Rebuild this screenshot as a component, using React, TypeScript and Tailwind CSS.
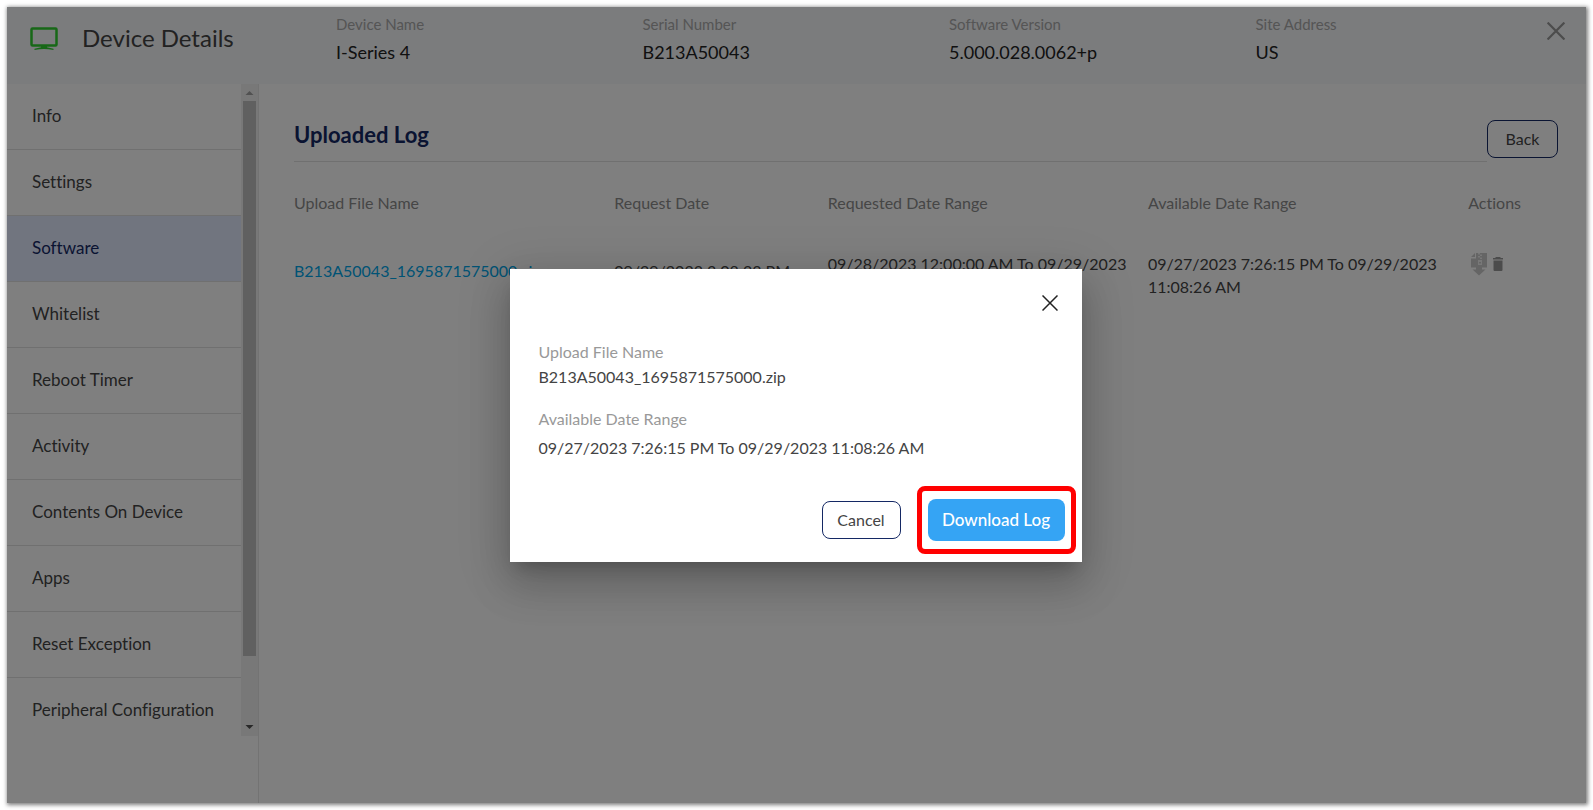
import type { ReactNode } from "react";

const deviceInfo = [
  { label: "Device Name", value: "I-Series 4" },
  { label: "Serial Number", value: "B213A50043" },
  { label: "Software Version", value: "5.000.028.0062+p" },
  { label: "Site Address", value: "US" },
];

const menu = [
  "Info",
  "Settings",
  "Software",
  "Whitelist",
  "Reboot Timer",
  "Activity",
  "Contents On Device",
  "Apps",
  "Reset Exception",
  "Peripheral Configuration",
];

const logs = [
  {
    file: "B213A50043_1695871575000.zip",
    requested: "09/29/2023 3:08:23 PM",
    requestedRange: "09/28/2023 12:00:00 AM To 09/29/2023 12:00:00 AM",
    availableRange: "09/27/2023 7:26:15 PM To 09/29/2023 11:08:26 AM",
  },
];

export default function App() {
  return (
    <div className="flex min-h-screen bg-white p-[7px] font-['Lato',sans-serif] text-[#444] [font-variant-ligatures:none]">
      <div className="relative flex min-w-0 flex-1 flex-col bg-white shadow-[1px_1px_4px_1px_rgba(0,0,0,0.5)]">
        <Header />
        <div className="flex flex-1">
          <Sidebar active="Software" />
          <UploadedLog />
        </div>
        <div className="absolute inset-0 flex items-center justify-center bg-black/50 pt-[21px] pr-0.5">
          <DownloadDialog log={logs[0]} />
        </div>
      </div>
    </div>
  );
}

function Header() {
  return (
    <header className="relative flex h-[77px] items-start bg-[#f6f8fb]">
      <div className="flex w-[329px] shrink-0 items-center pt-[13px] pl-[23px]">
        <MonitorIcon />
        <h1 className="ml-6 text-2xl leading-9 font-normal">Device Details</h1>
      </div>
      <dl className="grid flex-1 grid-cols-4 pt-2 pr-6">
        {deviceInfo.map((item) => (
          <div key={item.label}>
            <dt className="text-[15px] leading-[18px] text-[#aaa]">{item.label}</dt>
            <dd className="pt-[7px] text-lg leading-6 text-[#222]">{item.value}</dd>
          </div>
        ))}
      </dl>
      <button type="button" aria-label="Close" className="absolute top-[15px] right-[21px] text-[#999]">
        <CloseIcon size={18} stroke={2} />
      </button>
    </header>
  );
}

function Sidebar({ active }: { active: string }) {
  return (
    <aside className="w-[252px] shrink-0 border-r border-[#e6e6e6]">
      <div className="flex h-[652px]">
        <nav className="flex-1 overflow-hidden">
          {menu.map((item) => (
            <a
              key={item}
              href="#"
              className={
                item === active
                  ? "block h-[66px] border-b border-[#e0e0e0] bg-[#e2eaff] pl-[25px] text-[17px] leading-[64px] text-[#142864]"
                  : "block h-[66px] border-b border-[#e0e0e0] pl-[25px] text-[17px] leading-[64px]"
              }
            >
              {item}
            </a>
          ))}
        </nav>
        <div className="flex w-[17px] flex-col items-center bg-[#f1f1f1]">
          <svg className="h-[17px] w-[17px] shrink-0" viewBox="0 0 17 17" fill="#a3a3a3">
            <path d="M8.500 7 12.500 11h-8z" />
          </svg>
          <div className="h-[555px] w-[13px] bg-[#c1c1c1]" />
          <svg className="mt-auto h-[17px] w-[17px] shrink-0" viewBox="0 0 17 17" fill="#505050">
            <path d="M8.500 10 12.500 6h-8z" />
          </svg>
        </div>
      </div>
    </aside>
  );
}

function UploadedLog() {
  return (
    <main className="min-w-0 flex-1 pt-9 pr-[26px] pl-5">
      <div className="flex items-start pr-0.5 pl-[15px]">
        <h2 className="h-[42px] flex-1 border-b border-[#e0e0e0] text-[22px] leading-[30px] font-bold text-[#142864]">Uploaded Log</h2>
        <OutlineButton className="w-[71px]">Back</OutlineButton>
      </div>
      <table className="mt-[29px] w-full table-fixed text-left text-base leading-[23px]">
        <thead>
          <tr className="text-[#8c8c8c]">
            <th className="w-3/12 pl-[15px] font-normal">Upload File Name</th>
            <th className="w-2/12 pl-[15px] font-normal">Request Date</th>
            <th className="w-3/12 pl-[15px] font-normal">Requested Date Range</th>
            <th className="w-3/12 pl-[15px] font-normal">Available Date Range</th>
            <th className="w-1/12 pl-[15px] font-normal">Actions</th>
          </tr>
        </thead>
        <tbody>
          {logs.map((log) => (
            <tr key={log.file} className="align-top">
              <td className="pt-[45px] pl-[15px]">
                <a href="#" className="text-[#00a6ea]">{log.file}</a>
              </td>
              <td className="pt-[45px] pl-[15px] whitespace-nowrap">{log.requested}</td>
              <td className="pt-[38px] pl-[15px]">{log.requestedRange}</td>
              <td className="pt-[38px] pl-[15px]">{log.availableRange}</td>
              <td className="pt-[38px] pl-[15px]">
                <div className="flex gap-1 pl-0.5">
                  <button type="button" aria-label="Download log">
                    <ZipIcon />
                  </button>
                  <button type="button" aria-label="Delete log">
                    <TrashIcon />
                  </button>
                </div>
              </td>
            </tr>
          ))}
        </tbody>
      </table>
    </main>
  );
}

function DownloadDialog({ log }: { log: (typeof logs)[number] }) {
  return (
    <div
      role="dialog"
      aria-label="Download log"
      className="w-[572px] bg-white shadow-[0_11px_15px_-7px_rgba(0,0,0,0.2),0_24px_38px_3px_rgba(0,0,0,0.14),0_9px_46px_8px_rgba(0,0,0,0.12)]"
    >
      <div className="flex justify-end pt-[26px] pr-6">
        <button type="button" aria-label="Close" className="text-[#222]">
          <CloseIcon size={16} stroke={1.5} />
        </button>
      </div>
      <dl className="px-[29px] pt-7 text-base leading-[25px]">
        <dt className="text-[#999]">Upload File Name</dt>
        <dd>{log.file}</dd>
        <dt className="pt-[17px] text-[#999]">Available Date Range</dt>
        <dd className="pt-1">{log.availableRange}</dd>
      </dl>
      <div className="flex items-center justify-end gap-4 pt-[26px] pr-1.5 pb-2">
        <OutlineButton className="w-[79px]">Cancel</OutlineButton>
        <div className="rounded-lg border-5 border-[#ff0000] px-1.5 py-2">
          <button type="button" className="h-[42px] w-[137px] rounded-lg bg-[#35a4f4] text-[17px] font-medium text-white">
            Download Log
          </button>
        </div>
      </div>
    </div>
  );
}

function OutlineButton({ className, children }: { className: string; children: ReactNode }) {
  return (
    <button type="button" className={`h-[38px] rounded-lg border border-[#142864] text-base ${className}`}>
      {children}
    </button>
  );
}

function CloseIcon({ size, stroke }: { size: number; stroke: number }) {
  return (
    <svg width={size} height={size} viewBox="0 0 16 16" fill="none" stroke="currentColor" strokeWidth={stroke}>
      <path d="M.5.5l15 15M15.500.5l-15 15" />
    </svg>
  );
}

function MonitorIcon() {
  return (
    <svg width="28" height="24" viewBox="0 0 28 24" fill="#2fd02f">
      <rect x="1.500" y="2.500" width="25" height="17" rx="1" fill="none" stroke="#2fd02f" strokeWidth="2.500" />
      <path d="M11 20h6v1.200l6.500 1.500v1.300q-9.500-1.800-19 0v-1.300l6.500-1.500z" />
    </svg>
  );
}

function ZipIcon() {
  return (
    <svg width="18" height="24" viewBox="0 0 18 24" fill="#cbcbcb">
      <path d="M6 1h11v14.500H1V6.500h5z" />
      <path d="M1 5l4-4v4zM6 16.500h6v1h3.500L9 23.500 2.500 17.500H6z" />
      <path d="M6 14.500h6v4H6z" />
      <path d="M8 1h2v1.500H8zM10 2.500h2V4h-2zM8 4h2v1.500H8zM10 5.500h2V7h-2zM8 8h4v5H8z" fill="#f0f0f0" />
      <path d="M9 10h2v1.500H9z" />
    </svg>
  );
}

function TrashIcon() {
  return (
    <svg width="12" height="24" viewBox="0 0 12 24" fill="#999">
      <path d="M4 5h4l1 1h2v1.500H1V6h2zM1.500 8.500h9V18q0 1-1 1h-7q-1 0-1-1z" />
    </svg>
  );
}
